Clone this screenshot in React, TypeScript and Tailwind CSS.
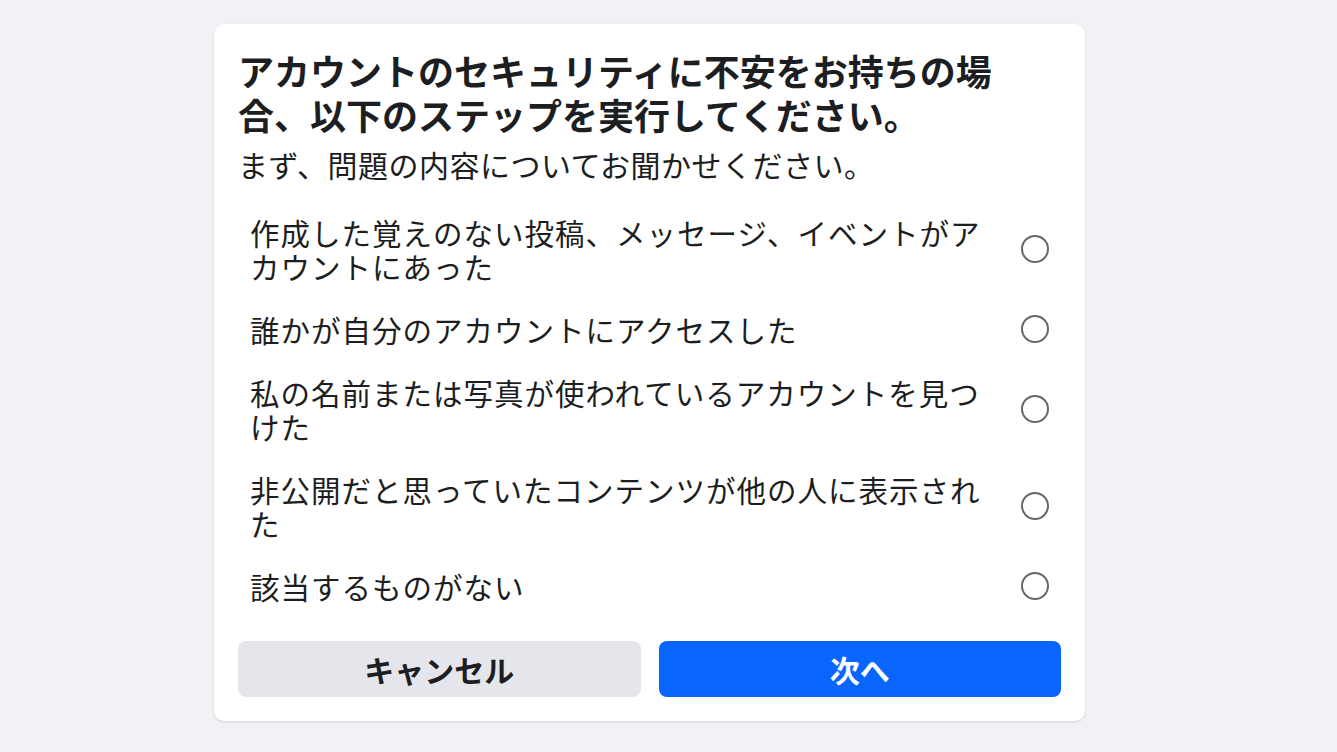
import React from "react";

const options: React.ReactNode[] = [
  <>作成した覚えのない投稿、メッセージ、イベントがア<br />カウントにあった</>,
  <>誰かが自分のアカウントにアクセスした</>,
  <>私の名前または写真が使われているアカウントを見つ<br />けた</>,
  <>非公開だと思っていたコンテンツが他の人に表示され<br />た</>,
  <>該当するものがない</>,
];

export default function App() {
  return (
    <div
      className="min-h-[752px] w-full bg-[#f0f2f5] pl-[214px] pt-[24px]"
      style={{ fontFamily: '"Noto Sans CJK JP", "Noto Sans", sans-serif' }}
    >
      <div className="w-[871px] rounded-[10px] bg-white px-6 pt-[24px] pb-6 shadow-[0_1px_3px_rgba(0,0,0,0.12)]">
        <h1 className="text-[36px] font-bold leading-[44px] text-[#1c1e21] whitespace-nowrap">
          アカウントのセキュリティに不安をお持ちの場
          <br />
          合、以下のステップを実行してください。
        </h1>
        <p className="mt-[8px] text-[30px] leading-[40px] tracking-[0.5px] text-[#1c1e21] whitespace-nowrap">
          まず、問題の内容についてお聞かせください。
        </p>
        <div className="mt-[16px] flex flex-col">
          {options.map((o, i) => (
            <label
              key={i}
              className="flex items-center gap-3 px-3 py-[14.5px] cursor-pointer"
            >
              <span className="flex-1 whitespace-nowrap text-[29.5px] leading-[34px] tracking-[1px] text-[#1c1e21]">
                {o}
              </span>
              <span className="h-[28px] w-[28px] shrink-0 rounded-full border-2 border-[#65676b]" />
            </label>
          ))}
        </div>
        <div className="mt-6 grid grid-cols-2 gap-[18px]">
          <button className="h-[56px] rounded-[8px] bg-[#e4e6eb] text-[30px] font-bold text-[#1c1e21]">
            キャンセル
          </button>
          <button className="h-[56px] rounded-[8px] bg-[#0866ff] text-[30px] font-bold text-white">
            次へ
          </button>
        </div>
      </div>
    </div>
  );
}
